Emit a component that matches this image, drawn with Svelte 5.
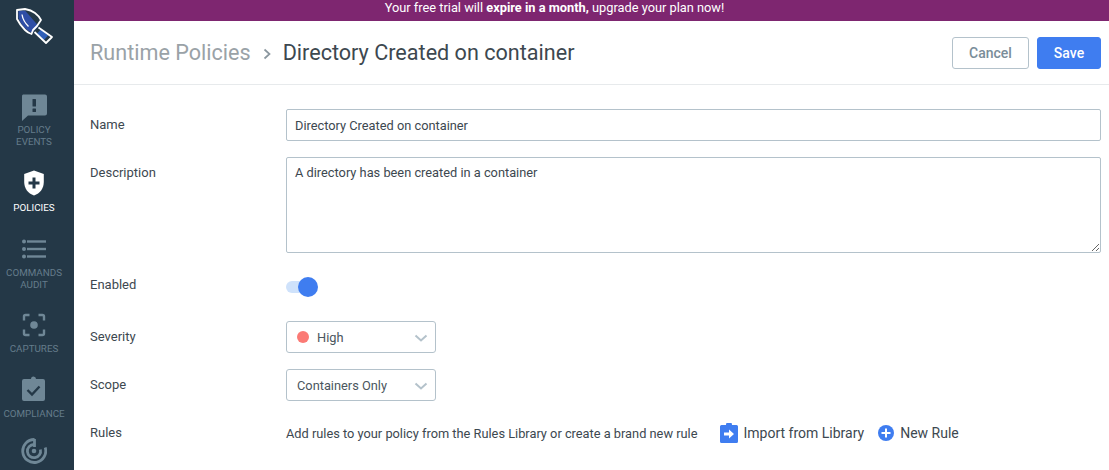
<script>
  const nav = [
    { id: 'events', lines: ['POLICY', 'EVENTS'] },
    { id: 'policies', lines: ['POLICIES'], active: true },
    { id: 'audit', lines: ['COMMANDS', 'AUDIT'] },
    { id: 'captures', lines: ['CAPTURES'] },
    { id: 'compliance', lines: ['COMPLIANCE'] },
    { id: 'radar', lines: [] }
  ];
</script>

<div class="shell">
  <aside class="sidebar">
    <div class="logo">
      <svg width="48" height="44" viewBox="10 4 48 44">
        <path d="M18.500 11 L25 10.500 L38.500 26 L32 33 Q22 28 18.500 18Z" fill="#2f4ea6"/>
        <path d="M22 14.500 Q23 21 28.500 26.500" fill="none" stroke="#fff" stroke-width="1.300"/>
        <path d="M17 10 L25 9 Q31 10 35 13 Q39 16 41 20 L37 26 L33 30 L31.500 34 Q28 33 25 30 Q20 25 17 19Z" fill="none" stroke="#fff" stroke-width="1.800" stroke-linejoin="round"/>
        <path d="M41 29.500 L48 35.500 L44 40 L37 33.500Z" fill="#2f5fb8"/>
        <path d="M38.500 27.500 L52 37 L46 43 L34.500 32" fill="none" stroke="#fff" stroke-width="1.800" stroke-linejoin="round"/>
      </svg>
    </div>
    {#each nav as item (item.id)}
      <div class="nav {item.id}" class:active={item.active}>
        <div class="icon">
          {#if item.id === 'events'}
            <svg width="28" height="28" viewBox="0 0 28 28"><path d="M3 1.500h22a2 2 0 0 1 2 2v17a2 2 0 0 1-2 2H8l-6 5.500V3.500a2 2 0 0 1 1-2z" fill="currentColor"/><rect x="12.500" y="6" width="3.500" height="7.500" rx=".5" fill="#243847"/><rect x="12.500" y="15.500" width="3.500" height="3.500" rx=".5" fill="#243847"/></svg>
          {:else if item.id === 'policies'}
            <svg width="20" height="26" viewBox="0 0 20 26"><path d="M10 0.500 L19.800 4 V12 C19.800 18.500 16 23.500 10 25.500 C4 23.500 0.200 18.500 0.200 12 V4Z" fill="#fff"/><path d="M8.500 7.500h3v4h4v3h-4v4h-3v-4h-4v-3h4z" fill="#243847"/></svg>
          {:else if item.id === 'audit'}
            <svg width="24" height="20" viewBox="0 0 24 20"><g fill="currentColor"><circle cx="2" cy="2.500" r="2"/><circle cx="2" cy="10" r="2"/><circle cx="2" cy="17.500" r="2"/><rect x="5" y="1.300" width="19" height="2.400"/><rect x="5" y="8.800" width="19" height="2.400"/><rect x="5" y="16.300" width="19" height="2.400"/></g></svg>
          {:else if item.id === 'captures'}
            <svg width="24" height="24" viewBox="0 0 24 24"><path d="M2 7.500V3.500a1.500 1.500 0 0 1 1.500-1.500h4M16.500 2h4A1.500 1.500 0 0 1 22 3.500v4M22 16.500v4a1.500 1.500 0 0 1-1.500 1.500h-4M7.500 22h-4A1.500 1.500 0 0 1 2 20.500v-4" fill="none" stroke="currentColor" stroke-width="2.400"/><circle cx="12" cy="12" r="3.800" fill="currentColor"/></svg>
          {:else if item.id === 'compliance'}
            <svg width="23" height="25" viewBox="0 0 23 25"><path d="M2 3h7a2.500 2.500 0 0 1 5 0h7a2 2 0 0 1 2 2v18a2 2 0 0 1-2 2H2a2 2 0 0 1-2-2V5a2 2 0 0 1 2-2z" fill="currentColor"/><path d="M5.500 14l4.500 4.500L17.500 10.500" fill="none" stroke="#243847" stroke-width="2.400"/></svg>
          {:else}
            <svg width="26" height="26" viewBox="0 0 26 26"><g fill="none" stroke="currentColor" stroke-width="2.800"><path d="M13.500 1.500A11.500 11.500 0 1 0 24.200 9.500"/><path d="M13 6.500A6.600 6.600 0 1 0 19.400 11.500"/><path d="M13.500 1v8"/></g><circle cx="13" cy="13" r="2.300" fill="currentColor"/></svg>
          {/if}
        </div>
        {#if item.lines.length}
          <div class="label">{#each item.lines as line}<div>{line}</div>{/each}</div>
        {/if}
      </div>
    {/each}
  </aside>

  <div class="main">
    <div class="banner">Your free trial will <b>expire in a month,</b> upgrade your plan now!</div>
    <header class="header">
      <h1><span class="crumb">Runtime Policies</span>
        <svg class="sep" width="10" height="12" viewBox="0 0 10 12"><path d="M1.500 1.500L6.500 6l-5 4.500" fill="none" stroke="#8b979f" stroke-width="1.700"/></svg>
        <span>Directory Created on container</span></h1>
      <div class="actions">
        <button class="btn cancel">Cancel</button>
        <button class="btn save">Save</button>
      </div>
    </header>

    <form class="form">
      <label class="lbl" for="n">Name</label>
      <input id="n" class="field" value="Directory Created on container" />

      <label class="lbl" for="d">Description</label>
      <textarea id="d" class="field area">A directory has been created in a container</textarea>

      <div class="lbl">Enabled</div>
      <div class="toggle-row"><div class="toggle"><span class="track"></span><span class="knob"></span></div></div>

      <div class="lbl">Severity</div>
      <div class="select"><span class="dot"></span><span>High</span>
        <svg class="chev" width="14" height="8" viewBox="0 0 14 8"><path d="M1.500 1.500L7 6.500l5.500-5" fill="none" stroke="#b4c2cb" stroke-width="2"/></svg></div>

      <div class="lbl">Scope</div>
      <div class="select"><span>Containers Only</span>
        <svg class="chev" width="14" height="8" viewBox="0 0 14 8"><path d="M1.500 1.500L7 6.500l5.500-5" fill="none" stroke="#b4c2cb" stroke-width="2"/></svg></div>

      <div class="lbl">Rules</div>
      <div class="rules">
        <span class="hint">Add rules to your policy from the Rules Library or create a brand new rule</span>
        <span class="link import">
          <svg width="18" height="20" viewBox="0 0 18 20"><path d="M1.500 2H6a3 3 0 0 1 6 0h4.500A1.500 1.500 0 0 1 18 3.500v15a1.500 1.500 0 0 1-1.500 1.500h-15A1.500 1.500 0 0 1 0 18.500v-15A1.500 1.500 0 0 1 1.500 2z" fill="#3f7df0"/><path d="M4 9.500h5V6.500l5 4.500-5 4.500v-3H4z" fill="#fff"/></svg>
          Import from Library</span>
        <span class="link new">
          <svg width="16" height="16" viewBox="0 0 16 16"><circle cx="8" cy="8" r="8" fill="#3f7df0"/><path d="M7 3.500h2V7h3.500v2H9v3.500H7V9H3.500V7H7z" fill="#fff"/></svg>
          New Rule</span>
      </div>
    </form>
  </div>
</div>

<style>
  :global(body) { margin: 0; background: #fff; }
  .shell { display: flex; width: 1109px; height: 470px; overflow: hidden; font-family: Roboto, "Liberation Sans", sans-serif; color: #3d4850; }
  .sidebar { width: 74px; box-sizing: border-box; padding-right: 6px; flex: none; background: #243847; color: #6f8796; display: flex; flex-direction: column; align-items: center; overflow: hidden; }
  .logo { height: 44px; margin-top: 4px; margin-bottom: 45px; }
  .logo svg { display: block; }
  .nav { display: flex; flex-direction: column; align-items: center; text-align: center; flex: none; }
  .icon { display: flex; justify-content: center; line-height: 0; }
  .label { font-size: 9.800px; line-height: 12px; color: #647c8b; margin-top: 3px; white-space: nowrap; }
  .active .label { color: #fff; margin-top: 6px; }
  .events { margin-bottom: 22px; }
  .policies { margin-bottom: 25px; }
  .audit .label { margin-top: 8px; }
  .audit { margin-bottom: 22px; }
  .captures .label { margin-top: 6px; }
  .captures { margin-bottom: 21px; }
  .compliance .label { margin-top: 7px; }
  .compliance { margin-bottom: 18px; }
  .main { flex: 1; min-width: 0; display: flex; flex-direction: column; }
  .banner { height: 21px; padding-right: 74px; background: #7e2670; color: #fff; font-size: 12.800px; line-height: 16px; text-align: center; }
  .banner b { font-weight: 700; }
  .header { height: 64px; box-sizing: border-box; border-bottom: 1px solid #e7eaec; display: flex; align-items: center; justify-content: space-between; padding: 0 8px 0 16px; flex: none; }
  h1 { margin: 0; font-size: 21.600px; font-weight: 400; color: #3d4850; display: flex; align-items: center; white-space: nowrap; }
  .crumb { color: #9aa2a7; }
  .sep { margin: 2px 10px 0 12px; }
  .actions { display: flex; gap: 8px; }
  .btn { height: 32px; border-radius: 3px; font-family: inherit; font-size: 14px; font-weight: 500; padding: 0; box-sizing: border-box; }
  .cancel { width: 77px; background: #fff; border: 1px solid #b4c2cb; color: #7a8d99; }
  .save { width: 64px; background: #3f7df0; border: 1px solid #3f7df0; color: #fff; }
  .form { display: grid; grid-template-columns: 196px 815px; row-gap: 16px; padding: 24px 0 0 16px; align-items: start; }
  .lbl { font-size: 13px; line-height: 32px; height: 32px; font-weight: 400; color: #3d4850; }
  .field { box-sizing: border-box; width: 815px; height: 32px; border: 1px solid #b4c2cb; border-radius: 2px; padding: 0 8px; font: 12.800px/18px Roboto, sans-serif; color: #3d4850; background: #fff; outline: none; margin: 0; display: block; }
  .area { height: 96px; padding: 6px 8px; resize: vertical; }
  .toggle-row { height: 36px; display: flex; align-items: center; }
  .toggle { position: relative; width: 32px; height: 20px; }
  .track { position: absolute; left: 0; top: 4px; width: 22px; height: 12px; border-radius: 6px; background: #cfe2fb; }
  .knob { position: absolute; right: 0; top: 0; width: 20px; height: 20px; border-radius: 50%; background: #3f7df0; }
  .select { box-sizing: border-box; width: 150px; height: 32px; border: 1px solid #b4c2cb; border-radius: 3px; display: flex; align-items: center; gap: 8px; padding: 0 10px; font-size: 12.800px; color: #4b565e; position: relative; }
  .dot { width: 12px; height: 12px; border-radius: 50%; background: #fb7a75; }
  .chev { position: absolute; right: 7px; top: 12px; }
  .rules { height: 32px; display: flex; align-items: center; font-size: 12.800px; color: #3d4850; }
  .link { display: flex; align-items: center; font-size: 14px; font-weight: 400; color: #3d4850; white-space: nowrap; }
  .import { margin-left: 23px; gap: 5px; }
  .new { margin-left: 14px; gap: 6px; }
</style>
